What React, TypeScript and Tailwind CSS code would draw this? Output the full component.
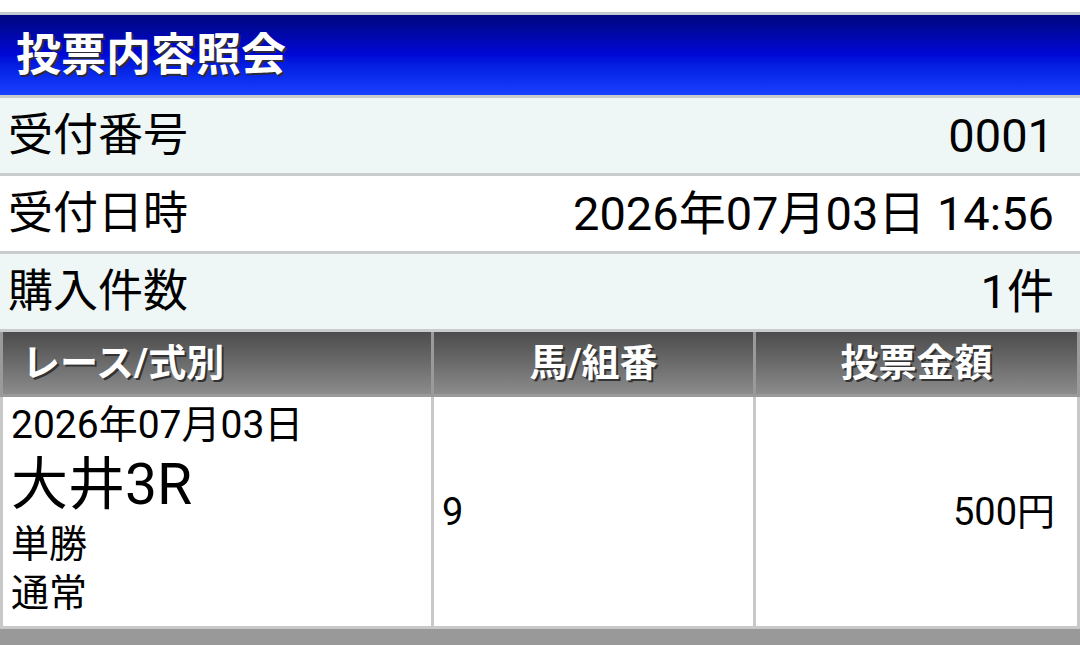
const font = "font-['Roboto','Noto_Sans_CJK_JP',sans-serif]";

const summary = [
  { label: "受付番号", value: "0001", tone: "bg-[#eef6f6]" },
  { label: "受付日時", value: "2026年07月03日 14:56", tone: "bg-white" },
  { label: "購入件数", value: "1件", tone: "bg-[#eef6f6]" },
];

const cols = "grid grid-cols-[428px_319px_321px] gap-x-[3px] px-[3px]";

export default function App() {
  return (
    <div className={`w-[1080px] h-[645px] bg-[#999999] overflow-hidden text-black ${font}`}>
      <div className="h-[12px] bg-white" />
      <div className="h-[3px] bg-[#c6c8d0]" />

      <div className="h-[80px] flex items-center pl-[16px] bg-gradient-to-b from-[#00067e] via-[#0008d8] to-[#1a40ff]">
        <h1 className="text-[45px] leading-none font-bold text-white [text-shadow:2px_2px_0_#2a2a3a]">
          投票内容照会
        </h1>
      </div>

      {summary.map((row) => (
        <div key={row.label} className={`h-[78px] border-t-[3px] border-[#c8cccc] flex items-center justify-between pl-[8px] pr-[26px] ${row.tone}`}>
          <span className="text-[45px] leading-none">{row.label}</span>
          <span className="text-[47px] leading-none">{row.value}</span>
        </div>
      ))}

      <div className="h-[3px] bg-[#c8cccc]" />

      <div className={`${cols} bg-[#9a9a9a] pb-[3px]`}>
        <div className="h-[62px] flex items-center pl-[19px] bg-gradient-to-b from-[#4c4c4c] to-[#8c8c8c]">
          <span className="text-[38px] leading-none font-bold text-white [text-shadow:2px_2px_0_#333]">レース/式別</span>
        </div>
        <div className="h-[62px] flex items-center justify-center bg-gradient-to-b from-[#4c4c4c] to-[#8c8c8c]">
          <span className="text-[38px] leading-none font-bold text-white [text-shadow:2px_2px_0_#333]">馬/組番</span>
        </div>
        <div className="h-[62px] flex items-center justify-center bg-gradient-to-b from-[#4c4c4c] to-[#8c8c8c]">
          <span className="text-[38px] leading-none font-bold text-white [text-shadow:2px_2px_0_#333]">投票金額</span>
        </div>
      </div>

      <div className={`${cols} bg-[#c8c8c8] pb-[3px]`}>
        <div className="h-[229px] bg-white pl-[8px] pt-[4px] flex flex-col">
          <span className="text-[39px] leading-[49px]">2026年07月03日</span>
          <span className="text-[57px] leading-[70px]">大井3R</span>
          <span className="text-[38px] leading-[49px]">単勝</span>
          <span className="text-[38px] leading-[49px]">通常</span>
        </div>
        <div className="h-[229px] bg-white flex items-center pl-[8px]">
          <span className="text-[38px] leading-none">9</span>
        </div>
        <div className="h-[229px] bg-white flex items-center justify-end pr-[22px]">
          <span className="text-[38px] leading-none">500円</span>
        </div>
      </div>
    </div>
  );
}
